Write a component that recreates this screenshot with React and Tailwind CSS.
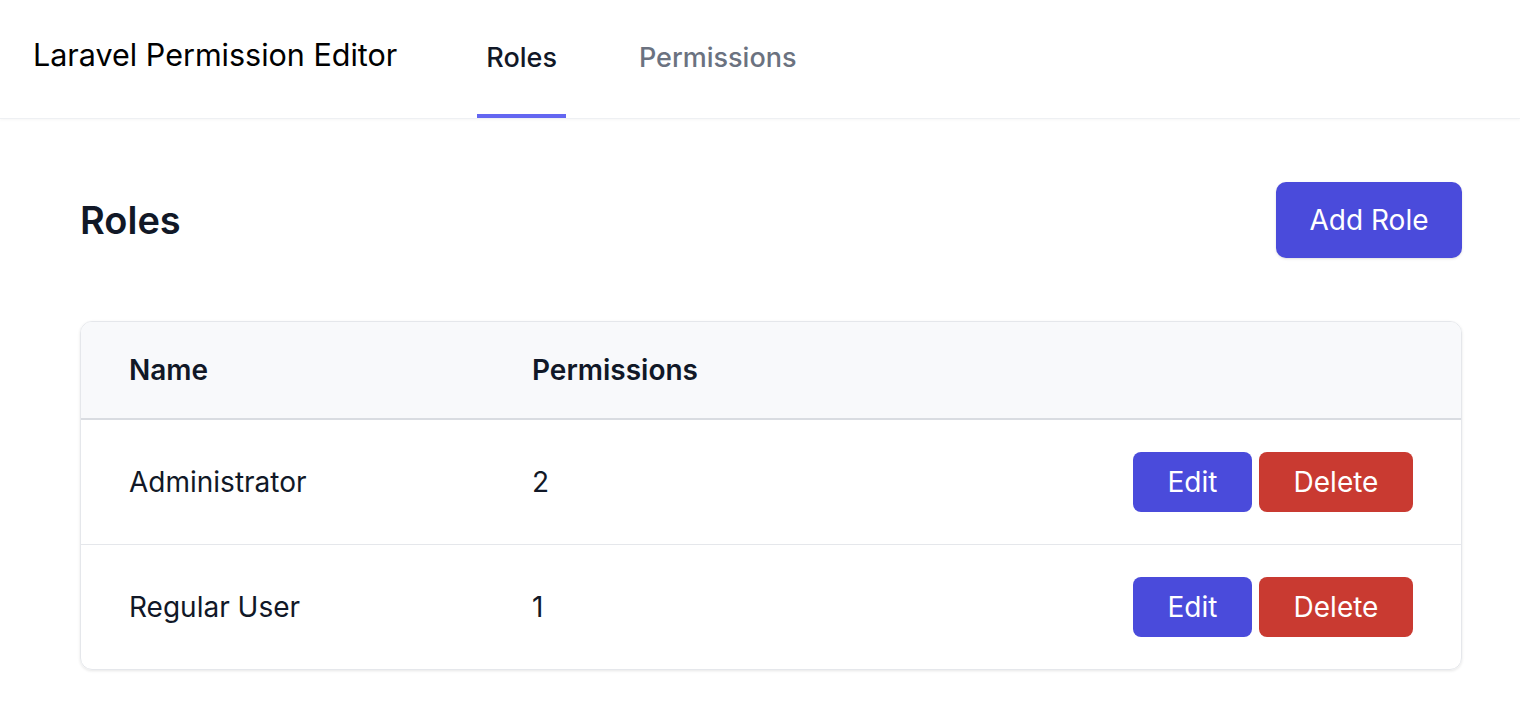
const roles = [
  { name: "Administrator", permissions: 2 },
  { name: "Regular User", permissions: 1 },
];

export default function App() {
  return (
    <div className="min-h-screen bg-white font-['Inter',sans-serif] text-[#111827]">
      <header className="flex h-[119px] items-stretch border-b border-[#eef0f3] bg-white px-[33px] shadow-[0_1px_3px_rgba(0,0,0,0.04)]">
        <div className="flex items-center pb-[8px] text-[30.5px] text-black">Laravel Permission Editor</div>
        <nav className="ml-[80px] flex gap-[64px]">
          <a className="flex items-center border-b-4 border-[#6366f1] px-[9px] pt-[2px] text-[27px] font-medium text-[#111827]">
            Roles
          </a>
          <a className="flex items-center border-b-4 border-transparent px-[9px] pt-[2px] text-[27px] font-medium text-[#6b7280]">
            Permissions
          </a>
        </nav>
      </header>

      <main className="pl-[80px] pr-[58px] pt-[63px]">
        <div className="flex items-center justify-between">
          <h1 className="text-[38px] font-semibold text-[#111827]">Roles</h1>
          <button className="h-[76px] w-[186px] rounded-[10px] bg-[#4a4bdb] text-[28px] text-white shadow-sm">
            Add Role
          </button>
        </div>

        <div className="mt-[63px] overflow-hidden rounded-[12px] border border-[#e5e7eb] shadow-[0_1px_3px_rgba(0,0,0,0.1)]">
          <table className="w-full border-collapse text-left">
            <thead className="bg-[#f8f9fb]">
              <tr className="h-[97px] border-b-2 border-[#d9dce1]">
                <th className="w-[451px] pl-[48px] text-[28px] font-semibold">Name</th>
                <th className="text-[28px] font-semibold">Permissions</th>
                <th></th>
              </tr>
            </thead>
            <tbody>
              {roles.map((role, i) => (
                <tr key={role.name} className={i > 0 ? "h-[125px] border-t border-[#e5e7eb]" : "h-[125px]"}>
                  <td className="pl-[48px] text-[28px]">{role.name}</td>
                  <td className="text-[28px]">{role.permissions}</td>
                  <td className="pr-[48px]">
                    <div className="flex justify-end gap-[7px]">
                      <button className="h-[60px] w-[119px] rounded-[8px] bg-[#4a4bdb] text-[28px] text-white">
                        Edit
                      </button>
                      <button className="h-[60px] w-[154px] rounded-[8px] bg-[#c93a31] text-[28px] text-white">
                        Delete
                      </button>
                    </div>
                  </td>
                </tr>
              ))}
            </tbody>
          </table>
        </div>
      </main>
    </div>
  );
}
